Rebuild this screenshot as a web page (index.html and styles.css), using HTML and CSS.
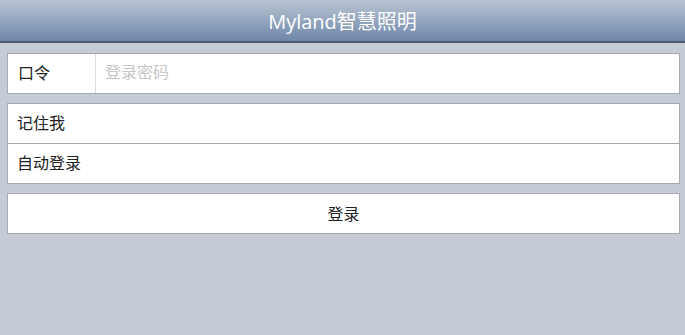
FILE: index.html
```html
<!DOCTYPE html>
<html lang="zh-CN">
<head>
    <meta charset="UTF-8">
    <meta name="viewport" content="width=device-width, initial-scale=1.0">
    <title>Myland智慧照明</title>
    <link rel="stylesheet" href="styles.css">
</head>
<body>
    <div class="header">Myland智慧照明</div>
    <div class="content">
        <div class="group">
            <div class="row">
                <label class="label" for="pwd">口令</label>
                <input class="input" type="password" id="pwd" placeholder="登录密码">
            </div>
        </div>
        <div class="group">
            <div class="row check">记住我</div>
            <div class="row check">自动登录</div>
        </div>
        <div class="group">
            <button class="btn">登录</button>
        </div>
    </div>
</body>
</html>
```

FILE: styles.css
```css
body {
    margin: 0;
    background: #c5ccd6;
    font-family: "Open Sans", "Noto Sans CJK SC", sans-serif;
    color: #222;
    height: 100vh;
}

.header {
    height: 41px;
    line-height: 43px;
    text-align: center;
    color: #fff;
    font-size: 20px;
    background: linear-gradient(#b9c4d2, #6e87a9);
    border-bottom: 2px solid #4a5a70;
}

.content {
    padding: 10px 5px 0 7px;
    display: flex;
    flex-direction: column;
    gap: 9px;
}

.group {
    background: #fff;
    border: 1px solid #a6a9ad;
}

.row {
    height: 39px;
    display: flex;
    align-items: stretch;
    font-size: 16px;
}

.row + .row {
    border-top: 1px solid #a6a9ad;
}

.label {
    width: 88px;
    box-sizing: border-box;
    padding: 0 0 3px 10px;
    display: flex;
    align-items: center;
    border-right: 1px solid #dcdcdc;
}

.input {
    flex: 1;
    border: none;
    outline: none;
    padding: 0 9px 3px;
    font: inherit;
    font-size: 16px;
}

.input::placeholder {
    color: #c6c6c6;
}

.check {
    align-items: center;
    box-sizing: border-box;
    padding: 0 0 3px 9px;
}

.row + .check {
    height: 40px;
}

.btn {
    display: block;
    width: 100%;
    height: 39px;
    padding-bottom: 3px;
    border: none;
    background: #fff;
    font: inherit;
    font-size: 16px;
    color: #222;
    cursor: pointer;
}
```
